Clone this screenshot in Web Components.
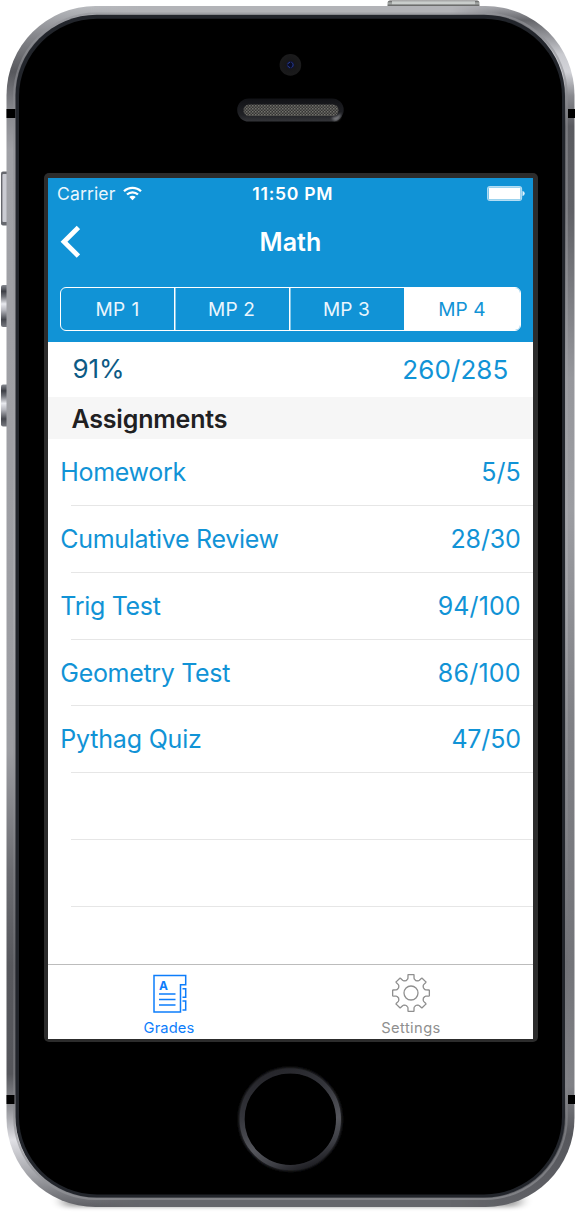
<!DOCTYPE html>
<html lang="en">
<head>
<meta charset="utf-8">
<title>Grades</title>
<style>html,body{margin:0;background:#fff}</style>
</head>
<body>
<phone-shell>
  <app-header heading="Math">
    <status-bar slot="status"></status-bar>
    <segment-bar slot="segments" items="MP 1,MP 2,MP 3,MP 4" selected="3"></segment-bar>
  </app-header>
  <score-summary percent="91%" points="260/285"></score-summary>
  <section-title>Assignments</section-title>
  <grade-list>
    <grade-row score="5/5">Homework</grade-row>
    <grade-row score="28/30" style="--ss:-.15px">Cumulative Review</grade-row>
    <grade-row score="94/100" style="--ss:.1px">Trig Test</grade-row>
    <grade-row score="86/100" style="--ss:.2px">Geometry Test</grade-row>
    <grade-row score="47/50" style="--ls:-.2px;--ss:-.2px">Pythag Quiz</grade-row>
    <grade-row></grade-row>
    <grade-row></grade-row>
  </grade-list>
  <tab-bar slot="tabs">
    <tab-item active label="Grades" style="--ls:.12px"><grades-icon></grades-icon></tab-item>
    <tab-item label="Settings" style="--ls:.42px"><gear-icon></gear-icon></tab-item>
  </tab-bar>
</phone-shell>
<script>
const define = (name, render) => customElements.define(name, class extends HTMLElement {
  connectedCallback() {
    if (this.shadowRoot) return;
    this.attachShadow({ mode: 'open' }).innerHTML = render(this);
  }
});

define('phone-shell', () => `
<style>
:host{display:grid;grid-template:1216px / 575px;width:575px;height:1216px;font-family:Inter,sans-serif;color:#1193d6;overflow:hidden}
svg,.face{grid-area:1/1}
svg{display:block}
.face{z-index:1;box-sizing:border-box;height:1216px;padding:173px 37.5px 174.5px 43.5px;display:flex}
.frame{flex:1;box-sizing:border-box;background:#2c2c2c;border-radius:5px;padding:5px 4.5px 2.5px;display:flex;min-height:0}
.screen{flex:1;background:#fff;display:flex;flex-direction:column;overflow:hidden;min-width:0;min-height:0}
.content{flex:1;min-height:0;overflow:hidden}
</style>
<svg width="575" height="1216" viewBox="0 0 575 1216">
  <defs>
    <linearGradient id="side" x1="0" y1="6" x2="0" y2="1206" gradientUnits="userSpaceOnUse">
      <stop offset="0" stop-color="#b9bbbf"/><stop offset=".025" stop-color="#85868b"/><stop offset=".055" stop-color="#57585d"/>
      <stop offset=".085" stop-color="#85868b"/><stop offset=".12" stop-color="#a0a1a6"/><stop offset=".62" stop-color="#9c9da2"/>
      <stop offset=".72" stop-color="#6c6d72"/><stop offset=".8" stop-color="#57585d"/><stop offset=".89" stop-color="#55565b"/>
      <stop offset=".92" stop-color="#96979c"/><stop offset=".945" stop-color="#e0e0e5"/><stop offset=".975" stop-color="#a0a1a6"/><stop offset="1" stop-color="#606166"/>
    </linearGradient>
    <linearGradient id="sideR" x1="0" y1="6" x2="0" y2="1206" gradientUnits="userSpaceOnUse">
      <stop offset="0" stop-color="#a5a6ab"/><stop offset=".012" stop-color="#66676c"/><stop offset=".04" stop-color="#c9cacf"/><stop offset=".055" stop-color="#d2d3d8"/>
      <stop offset=".075" stop-color="#88898e"/><stop offset=".1" stop-color="#5a5b60"/><stop offset=".17" stop-color="#606166"/><stop offset=".24" stop-color="#7b7c81"/>
      <stop offset=".31" stop-color="#96979c"/><stop offset=".42" stop-color="#9c9da2"/><stop offset=".6" stop-color="#7f8085"/><stop offset=".8" stop-color="#737479"/>
      <stop offset=".9" stop-color="#808186"/><stop offset=".94" stop-color="#56575c"/><stop offset="1" stop-color="#606166"/>
    </linearGradient>
    <linearGradient id="fade" x1="90" x2="500" gradientUnits="userSpaceOnUse"><stop offset="0" stop-color="#fff" stop-opacity="0"/><stop offset=".12" stop-color="#fff"/><stop offset=".88" stop-color="#fff"/><stop offset="1" stop-color="#fff" stop-opacity="0"/></linearGradient>
    <mask id="mid"><rect width="575" height="1216" fill="url(#fade)"/></mask>
    <clipPath id="left"><rect width="288" height="1216"/></clipPath>
    <clipPath id="right"><rect x="288" width="287" height="1216"/></clipPath>
    <linearGradient id="edge" x2="0" y2="1"><stop offset="0" stop-color="#94959a"/><stop offset=".07" stop-color="#8b8c91"/><stop offset=".5" stop-color="#b0b1b5"/><stop offset=".8" stop-color="#707176"/><stop offset="1" stop-color="#96979b"/></linearGradient>
    <linearGradient id="btn" x2="0" y2="1"><stop offset="0" stop-color="#888b92"/><stop offset=".15" stop-color="#3c3e45"/><stop offset=".27" stop-color="#6e7077"/><stop offset=".45" stop-color="#e8e9ee"/><stop offset=".6" stop-color="#b5b6bd"/><stop offset=".82" stop-color="#45474e"/><stop offset="1" stop-color="#777980"/></linearGradient>
    <linearGradient id="power" x2="0" y2="1"><stop offset="0" stop-color="#555"/><stop offset=".3" stop-color="#a9adab"/><stop offset=".65" stop-color="#555"/><stop offset="1" stop-color="#777"/></linearGradient>
    <linearGradient id="home" x1=".3" y1="0" x2=".7" y2="1"><stop offset="0" stop-color="#26262b"/><stop offset=".3" stop-color="#33343a"/><stop offset=".65" stop-color="#55565c"/><stop offset=".85" stop-color="#3d3e44"/><stop offset="1" stop-color="#1e1e23"/></linearGradient>
    <linearGradient id="grille" x2="0" y2="1"><stop offset="0" stop-color="#111216"/><stop offset=".7" stop-color="#202125"/><stop offset="1" stop-color="#343539"/></linearGradient>
    <radialGradient id="lens"><stop offset="0" stop-color="#24409a"/><stop offset=".3" stop-color="#11143a"/><stop offset=".4" stop-color="#171719"/><stop offset="1" stop-color="#1b1b1c"/></radialGradient>
    <pattern id="mesh" width="3" height="3" patternUnits="userSpaceOnUse"><rect width="3" height="3" fill="#353533"/><rect width="1.5" height="1.5" fill="#73726d"/><rect x="1.5" y="1.5" width="1.5" height="1.5" fill="#62615e"/></pattern>
    <filter id="soft" x="-20%" y="-200%" width="140%" height="500%"><feGaussianBlur stdDeviation="6 2"/></filter>
    <filter id="glow" x="-10%" y="-10%" width="120%" height="120%"><feGaussianBlur stdDeviation=".8"/></filter>
  </defs>
  <rect x="62" y="1194" width="459" height="13" rx="6" fill="#000" opacity=".35" filter="url(#soft)"/>
  <rect x="387.500" y=".5" width="92" height="9" rx="2.500" fill="url(#power)"/>
  <rect x="392" y="1.200" width="83" height="3" fill="#c9cdcb"/>
  <rect x="1" y="171.500" width="9" height="54" rx="2" fill="#66686e"/>
  <rect x="2.400" y="174" width="5" height="48" rx="1" fill="#cbccd3"/>
  <rect x="1" y="285" width="9" height="42" rx="2" fill="url(#btn)"/>
  <rect x="1" y="384.500" width="9" height="42" rx="2" fill="url(#btn)"/>
  <rect x="6.500" y="6" width="568" height="1201" rx="89" fill="url(#side)" clip-path="url(#left)"/>
  <rect x="6.500" y="6" width="568" height="1201" rx="89" fill="url(#sideR)" clip-path="url(#right)"/>
  <g mask="url(#mid)"><rect x="80" y="6" width="430" height="10" fill="#b2b3b7"/><rect x="80" y="1196" width="430" height="11" fill="#65666b"/></g>
  <rect x="14.200" y="13.500" width="552.600" height="1185.500" rx="82" fill="none" stroke="url(#edge)" stroke-width="2" opacity=".6"/>
  <path d="M6.500 109h9v9h-9zM568 109h7v9h-7zM6.500 1095h8v9h-8zM568 1095h7v9h-7z" fill="#000"/>
  <rect x="15.500" y="14.800" width="549.500" height="1182.700" rx="81" fill="#22252b"/>
  <rect x="19" y="18.800" width="543" height="1175.700" rx="78" fill="#000"/>
  <circle cx="290.400" cy="64.900" r="10.800" fill="url(#lens)"/>
  <circle cx="290.400" cy="64.900" r="2.700" fill="#080b24" stroke="#293f8e" stroke-dasharray="3 1.500"/>
  <rect x="237.200" y="98.500" width="106.500" height="23" rx="11.500" fill="url(#grille)"/>
  <rect x="243.500" y="104.500" width="95" height="11.500" rx="5.500" fill="url(#mesh)"/>
  <path d="M331 118q7-1 10-5-1 8-6 8z" fill="#77787c" filter="url(#glow)"/>
  <circle cx="290.300" cy="1119.300" r="49.500" fill="none" stroke="#25262c" stroke-width="5" filter="url(#glow)"/>
  <circle cx="290.300" cy="1119.300" r="48.200" fill="none" stroke="url(#home)" stroke-width="5"/>
</svg>
<div class="face"><div class="frame"><div class="screen"><div class="content"><slot></slot></div><slot name="tabs"></slot></div></div></div>`);

define('status-bar', () => `
<style>
:host{display:grid;grid-template-columns:1fr auto 1fr;align-items:center;height:31px;padding:0 8.500px 0 9px;color:#fff;font-size:17.600px;line-height:31px}
.l{display:flex;align-items:center;gap:8px;letter-spacing:.1px;color:#eaf6fd}
.t{font-weight:600;letter-spacing:.7px;padding-left:4px}
.b{justify-self:end}
svg{display:block}
</style>
<div class="l"><span>Carrier</span><svg width="19" height="15" viewBox="0 0 19 15"><g fill="none" stroke="#fff" stroke-width="2.300"><path d="M1 5.300a12.200 12.200 0 0 1 17 0M4 8.500a8 8 0 0 1 11 0"/></g><path d="M6.300 11a4.500 4.500 0 0 1 6.400 0L9.500 14.200z" fill="#fff"/></svg></div>
<div class="t">11:50 PM</div>
<svg class="b" width="38" height="15" viewBox="0 0 38 15"><rect x=".6" y=".6" width="34" height="13.800" rx="2.500" fill="none" stroke="#b5def4" stroke-width="1.100"/><rect x="1.600" y="1.600" width="32" height="11.800" rx="1" fill="#fff"/><path d="M35.500 5q2.200.3 2.200 2.500t-2.200 2.500z" fill="#e4f4fc"/></svg>`);

define('app-header', el => `
<style>
:host{display:block;height:163.700px;background:#1193d6;color:#fff}
.nav{display:grid;grid-template-columns:1fr auto 1fr;align-items:center;height:66px;padding:0 12px;margin-bottom:12.300px}
h1{margin:0;font-size:25px;font-weight:600;line-height:66px;letter-spacing:.1px}
svg{display:block}
</style>
<slot name="status"></slot>
<div class="nav"><svg width="20" height="34" viewBox="0 0 20 34"><path d="M18.400 2.400 4 16.700l14.400 14.300" fill="none" stroke="#fff" stroke-width="4.800"/></svg><h1>${el.getAttribute('heading')}</h1></div>
<slot name="segments"></slot>`);

define('segment-bar', el => {
  const sel = +el.getAttribute('selected');
  return `
<style>
:host{display:grid;grid-template-columns:113px 115px 115px 1fr;box-sizing:border-box;height:44px;margin:0 12px;border:1.500px solid #fff;border-radius:6px;overflow:hidden;font-size:19.100px;letter-spacing:.1px;line-height:43px;color:#eaf6fd;text-align:center}
div{box-shadow:inset 1.500px 0 #fff}
div:first-of-type{box-shadow:none;letter-spacing:.4px}
.on{background:#fff;color:#1193d6}
</style>${el.getAttribute('items').split(',').map((t, i) => `<div${i === sel ? ' class="on"' : ''}>${t}</div>`).join('')}`;
});

define('score-summary', el => `
<style>
:host{display:flex;justify-content:space-between;height:55.300px;padding:0 24.500px 0 24.500px;font-size:26px;line-height:55px}
.p{color:#0c5a85;letter-spacing:-.1px;line-height:53px}
.s{letter-spacing:.12px}
</style><span class="p">${el.getAttribute('percent')}</span><span class="s">${el.getAttribute('points')}</span>`);

define('section-title', () => `
<style>:host{display:block;height:42.500px;padding-left:23.500px;background:#f6f6f6;color:#202022;font-size:25px;font-weight:600;line-height:44px;letter-spacing:-.2px}</style><slot></slot>`);

define('grade-list', () => `<style>:host{display:block}</style><slot></slot>`);

define('grade-row', el => `
<style>
:host{display:flex;flex-direction:column;height:66.750px;font-size:25px;line-height:67px}
.r{flex:1;display:flex;justify-content:space-between;padding:0 12.300px 0 12.300px;min-height:0}
.n{letter-spacing:var(--ls,-.32px)}
.s{letter-spacing:var(--ss,0px)}
hr{width:calc(100% - 23px);height:1px;margin:0 0 0 23px;border:0;background:#e6e6e6;flex:none}
</style><div class="r"><span class="n"><slot></slot></span><span class="s">${el.getAttribute('score') || ''}</span></div><hr>`);

define('tab-bar', () => `
<style>:host{display:grid;grid-template-columns:1fr 1fr;height:74px;padding-right:1px;border-top:1px solid #bcbcbc;background:#fff}</style><slot></slot>`);

define('tab-item', el => `
<style>
:host{display:flex;flex-direction:column;align-items:center;padding-top:8px;color:#8f8f8f;font-size:14.700px;line-height:20px;letter-spacing:var(--ls)}
:host([active]){color:#0d7dfb}
.i{height:45px}
</style><div class="i"><slot></slot></div><span>${el.getAttribute('label')}</span>`);

define('grades-icon', () => `
<style>:host{display:block;width:37px;height:42px}svg{display:block}</style>
<svg width="37" height="42" viewBox="0 0 37 42"><g fill="none" stroke="currentColor" stroke-width="1.500"><path d="M3 2.500h31.700v9.200h-5.200v27.200H3z"/><path d="M31.500 15.700h3.200v8.500h-3.200M31.500 28h3.200v9h-3.200M8 21h16.500M8 26.600h16.500M8 32.100h16.500"/></g><text x="8" y="16.500" font-family="Inter,sans-serif" font-size="12" font-weight="700" letter-spacing="0" fill="currentColor">A</text></svg>`);

define('gear-icon', () => {
  const at = (r, d) => { const a = d * Math.PI / 180; return (20 + r * Math.cos(a)).toFixed(2) + ' ' + (20 + r * Math.sin(a)).toFixed(2); };
  let d = '';
  for (let k = 0; k < 8; k++) {
    const a = k * 45;
    d += (k ? 'L' : 'M') + at(14, a - 16) + 'Q' + at(14.2, a - 13) + ' ' + at(15.2, a - 11.5) + 'L' + at(18.2, a - 9.5) + 'Q' + at(18.7, a - 9) + ' ' + at(18.5, a - 7)
      + 'L' + at(18.5, a + 7) + 'Q' + at(18.7, a + 9) + ' ' + at(18.2, a + 9.5) + 'L' + at(15.2, a + 11.5) + 'Q' + at(14.2, a + 13) + ' ' + at(14, a + 16) + 'Q' + at(12.8, a + 22.5) + ' ' + at(14, a + 29);
  }
  return `<style>:host{display:block;width:40px;height:40px}svg{display:block}</style>
<svg width="40" height="40" viewBox="0 0 40 40" fill="none" stroke="currentColor" stroke-width="1.300" stroke-linejoin="round"><path d="${d}Z"/><circle cx="20" cy="20" r="7"/></svg>`;
});
</script>
</body>
</html>
